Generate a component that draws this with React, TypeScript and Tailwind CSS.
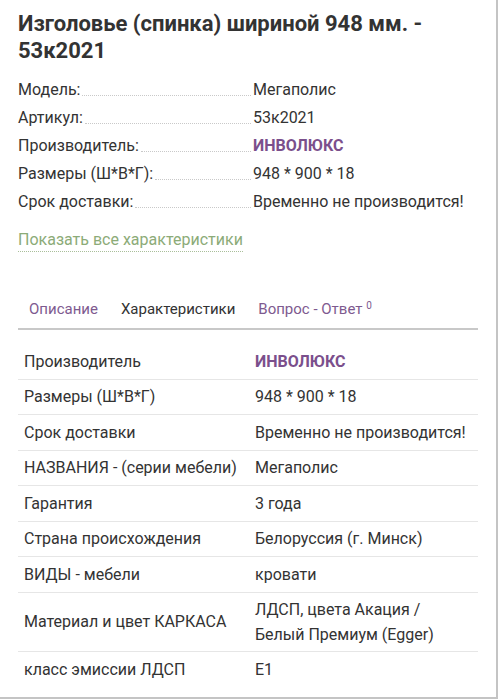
const specs = [
  { label: "Модель:", value: "Мегаполис" },
  { label: "Артикул:", value: "53к2021" },
  { label: "Производитель:", value: "ИНВОЛЮКС", brand: true },
  { label: "Размеры (Ш*В*Г):", value: "948 * 900 * 18" },
  { label: "Срок доставки:", value: "Временно не производится!" },
];

const rows: { label: string; value: string[]; brand?: boolean }[] = [
  { label: "Производитель", value: ["ИНВОЛЮКС"], brand: true },
  { label: "Размеры (Ш*В*Г)", value: ["948 * 900 * 18"] },
  { label: "Срок доставки", value: ["Временно не производится!"] },
  { label: "НАЗВАНИЯ - (серии мебели)", value: ["Мегаполис"] },
  { label: "Гарантия", value: ["3 года"] },
  { label: "Страна происхождения", value: ["Белоруссия (г. Минск)"] },
  { label: "ВИДЫ - мебели", value: ["кровати"] },
  {
    label: "Материал и цвет КАРКАСА",
    value: ["ЛДСП, цвета Акация /", "Белый Премиум (Egger)"],
  },
  { label: "класс эмиссии ЛДСП", value: ["E1"] },
];

export default function App() {
  return (
    <div className="min-h-[699px] w-[498px] bg-white font-['Roboto','Noto_Sans',sans-serif] text-[#333]">
      <div className="h-[699px] border-r-2 border-b-2 border-[#c4c4c4] pl-[18px] pr-[16px]">
        <h1 className="pt-[10px] text-[22px] font-bold leading-[27px] text-[#333]">
          Изголовье (спинка) шириной 948 мм. - 53к2021
        </h1>

        <div className="mt-[12px] flex flex-col">
          {specs.map((s) => (
            <div
              key={s.label}
              className="flex h-[28px] items-center text-[16px] leading-[20px]"
            >
              <div className="flex w-[235px] shrink-0 items-end">
                <span>{s.label}</span>
                <span className="mb-[4px] ml-[2px] mr-[2px] flex-1 border-b border-dotted border-[#c9c9c9]" />
              </div>
              <span
                className={
                  s.brand ? "font-bold text-[#7b4f8c]" : "text-[#333]"
                }
              >
                {s.value}
              </span>
            </div>
          ))}
        </div>

        <div className="mt-[12px]">
          <span className="border-b border-dotted border-[#a9bf9a] pb-[2px] text-[16px] leading-[20px] text-[#8cab78]">
            Показать все характеристики
          </span>
        </div>

        <div className="mt-[48px] mr-[2px] flex items-end gap-[23px] border-b-2 border-[#c8c8c8] pl-[11px] pb-[10px] text-[15px] leading-[18px]">
          <span className="text-[#7e5a8f]">Описание</span>
          <span className="text-[#333]">Характеристики</span>
          <span className="text-[#7e5a8f]">
            Вопрос - Ответ <sup className="text-[10px]">0</sup>
          </span>
        </div>

        <div className="mt-[14px] mr-[2px] flex flex-col text-[16px] leading-[25px]">
          {rows.map((r, i) => (
            <div
              key={r.label}
              className={`flex min-h-[35.5px] items-center py-[4px] pl-[6px] ${
                i < rows.length - 1 ? "border-b border-[#e6e6e6]" : ""
              }`}
            >
              <div className="w-[231px] shrink-0">{r.label}</div>
              <div
                className={r.brand ? "font-bold text-[#7b4f8c]" : "text-[#333]"}
              >
                {r.value.map((v) => (
                  <div key={v}>{v}</div>
                ))}
              </div>
            </div>
          ))}
        </div>
      </div>
    </div>
  );
}
